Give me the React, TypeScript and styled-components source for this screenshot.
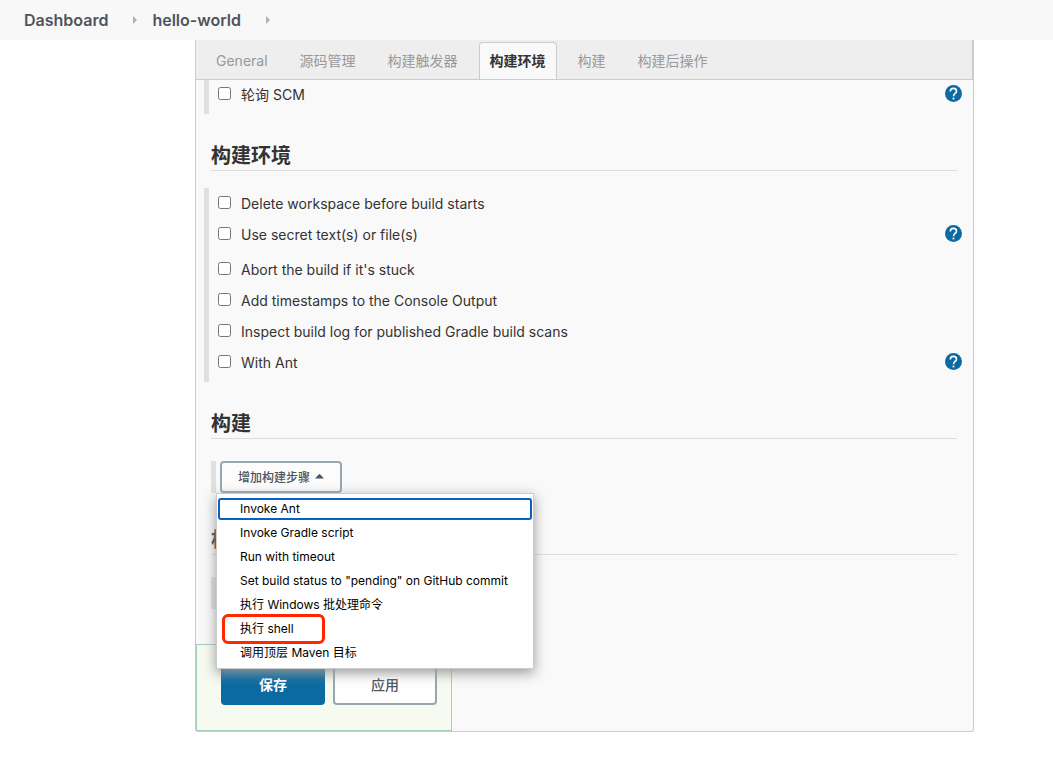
import React from "react";
import styled, { createGlobalStyle } from "styled-components";

const GlobalStyle = createGlobalStyle`
  *, *::before, *::after { box-sizing: border-box; }
  body {
    margin: 0;
    background: #fff;
    color: #333;
    font-family: Inter, "Noto Sans CJK SC", sans-serif;
    font-size: 14px;
    line-height: 20px;
  }
  button { font-family: inherit; cursor: pointer; }
`;

const Breadcrumbs = styled.nav`
  display: flex;
  align-items: center;
  height: 40px;
  padding: 0 24px;
  background: #f8f8f8;
`;

const Crumb = styled.a`
  color: #4d545d;
  font-size: 16px;
  font-weight: 600;
  text-decoration: none;
`;

const CrumbArrow = styled.svg`
  width: 4px;
  height: 8px;
  margin: 0 15px 0 25px;
  fill: #b0b0b0;
`;

const Panel = styled.main`
  margin: 0 79px 24px 195px;
  border: 1px solid #ccc;
  border-top: 0;
  border-radius: 0 0 3px 3px;
  background: #f9f9f9;
`;

const TabBar = styled.div`
  position: relative;
  z-index: 1;
  display: flex;
  align-items: flex-end;
  gap: 10px;
  height: 40px;
  padding: 0 9px;
  border-right: 1px solid #ccc;
  border-bottom: 1px solid #ccc;
  background: #eee;
`;

const Tab = styled.button<{ $active?: boolean }>`
  height: 37px;
  padding: 0 10px;
  border: 1px solid ${(p) => (p.$active ? "#ccc" : "transparent")};
  border-bottom: 0;
  border-radius: 4px 4px 0 0;
  background: ${(p) => (p.$active ? "#f9f9f9" : "transparent")};
  color: ${(p) => (p.$active ? "#333" : "#999")};
  font-size: 14px;
  font-weight: ${(p) => (p.$active ? 700 : 400)};
  line-height: 20px;
`;

const Form = styled.form`
  margin-top: -1px;
`;

const OptionGroup = styled.div`
  margin-left: 8px;
  border-left: 5px solid #e0e0e0;
`;

const OptionRow = styled.div<{ $tall?: boolean }>`
  display: flex;
  align-items: flex-start;
  justify-content: space-between;
  height: ${(p) => (p.$tall ? 35 : 31)}px;
  padding: 6px 11px 0 9px;
`;

const OptionLabel = styled.label`
  display: flex;
  align-items: flex-start;
  gap: 10px;
`;

const Checkbox = styled.input`
  width: 13px;
  height: 13px;
  margin: 2px 0 0;
`;

const HelpButton = styled.button`
  display: flex;
  width: 17px;
  height: 17px;
  padding: 0;
  border: 0;
  border-radius: 50%;
  background: #0b6aa2;
`;

const SectionTitle = styled.h2`
  margin: 29px 16px 0 15px;
  padding-bottom: 1px;
  border-bottom: 1px solid #ddd;
  font-size: 20px;
  font-weight: 600;
  line-height: 26px;

  & + ${OptionGroup} { margin-top: 17px; }
`;

const StepArea = styled.div`
  position: relative;
  display: flex;
  min-height: 32px;
  margin: 22px 16px 34px 15px;
  padding-left: 4px;
  border-left: 5px solid #e0e0e0;
`;

const StepButton = styled.button`
  display: flex;
  align-items: center;
  gap: 5px;
  height: 32px;
  padding: 0 16px 2px;
  border: 2px solid #98a6b0;
  border-radius: 4px;
  background: #fcfcfc;
  color: #4d545d;
  font-size: 12px;
  font-weight: 500;
`;

const Menu = styled.div`
  position: absolute;
  z-index: 2;
  top: 100%;
  left: 0;
  display: flex;
  flex-direction: column;
  gap: 2px;
  width: 318px;
  padding: 4px 1px;
  border: 1px solid #ccc;
  background: #fff;
  box-shadow: 0 4px 12px #999;
`;

const MenuItem = styled.button<{ $focused?: boolean; $marked?: boolean }>`
  position: relative;
  z-index: ${(p) => (p.$marked ? 1 : 0)};
  height: 22px;
  padding: 0 20px;
  border: 2px solid ${(p) => (p.$focused ? "#0a5fc4" : "transparent")};
  border-radius: 3px;
  background: #fff;
  color: #000;
  font-size: 12px;
  line-height: 18px;
  text-align: left;

  &::after {
    content: "";
    display: ${(p) => (p.$marked ? "block" : "none")};
    position: absolute;
    top: -6px;
    left: 2px;
    width: 103px;
    height: 30px;
    border: 3px solid #ff2600;
    border-radius: 6px;
  }
`;

const Footer = styled.div`
  display: flex;
  gap: 8px;
  width: fit-content;
  margin-top: 35px;
  padding: 20px 14px 25px 24px;
  border: 1px solid #a5cdb9;
  background: #f6faf0;
`;

const ActionButton = styled.button<{ $primary?: boolean }>`
  width: 104px;
  height: 40px;
  border: 2px solid ${(p) => (p.$primary ? "#0b6aa2" : "#98a6b0")};
  border-radius: 4px;
  background: ${(p) => (p.$primary ? "#0b6aa2" : "#fff")};
  color: ${(p) => (p.$primary ? "#fff" : "#4d545d")};
  font-size: 14px;
  font-weight: ${(p) => (p.$primary ? 700 : 500)};
  line-height: 20px;
`;

const tabs = ["General", "源码管理", "构建触发器", "构建环境", "构建", "构建后操作"];

const environmentOptions = [
  { label: "Delete workspace before build starts" },
  { label: "Use secret text(s) or file(s)", help: true },
  { label: "Abort the build if it's stuck" },
  { label: "Add timestamps to the Console Output" },
  { label: "Inspect build log for published Gradle build scans" },
  { label: "With Ant", help: true },
];

const steps = [
  "Invoke Ant",
  "Invoke Gradle script",
  "Run with timeout",
  'Set build status to "pending" on GitHub commit',
  "执行 Windows 批处理命令",
  "执行 shell",
  "调用顶层 Maven 目标",
];

function Separator() {
  return (
    <CrumbArrow viewBox="0 0 4 8" aria-hidden="true">
      <path d="M0 0 4 4 0 8Z" />
    </CrumbArrow>
  );
}

function Option({ label, help }: { label: string; help?: boolean }) {
  return (
    <OptionRow $tall={help}>
      <OptionLabel>
        <Checkbox type="checkbox" />
        {label}
      </OptionLabel>
      {help && (
        <HelpButton type="button" aria-label={label}>
          <svg width="17" height="17" viewBox="0 0 17 17" fill="none" aria-hidden="true">
            <path
              d="M5.3 6.4C5.3 4.500 6.700 3.400 8.400 3.400s3.100 1.100 3.100 2.800c0 2.200-3 2.400-3 5"
              stroke="#fff"
              strokeWidth="1.6"
            />
            <path d="M7.600 12.600h1.800v1.800H7.600z" fill="#fff" />
          </svg>
        </HelpButton>
      )}
    </OptionRow>
  );
}

export default function App() {
  return (
    <>
      <GlobalStyle />
      <Breadcrumbs>
        <Crumb href="#">Dashboard</Crumb>
        <Separator />
        <Crumb href="#">hello-world</Crumb>
        <Separator />
      </Breadcrumbs>
      <Panel>
        <TabBar role="tablist">
          {tabs.map((tab) => (
            <Tab key={tab} type="button" role="tab" $active={tab === "构建环境"} aria-selected={tab === "构建环境"}>
              {tab}
            </Tab>
          ))}
        </TabBar>
        <Form>
          <OptionGroup>
            <Option label="轮询 SCM" help />
          </OptionGroup>
          <SectionTitle>构建环境</SectionTitle>
          <OptionGroup>
            {environmentOptions.map((option) => (
              <Option key={option.label} {...option} />
            ))}
          </OptionGroup>
          <SectionTitle>构建</SectionTitle>
          <StepArea>
            <StepButton type="button" aria-haspopup="menu" aria-expanded="true">
              增加构建步骤
              <svg width="9" height="5" viewBox="0 0 9 5" aria-hidden="true">
                <path d="M0 4.500 4 .3q.5-.5 1 0L9 4.500Z" fill="#4d545d" />
              </svg>
            </StepButton>
            <Menu role="menu">
              {steps.map((step, index) => (
                <MenuItem key={step} type="button" role="menuitem" $focused={index === 0} $marked={step === "执行 shell"}>
                  {step}
                </MenuItem>
              ))}
            </Menu>
          </StepArea>
          <SectionTitle>构建后操作</SectionTitle>
          <StepArea />
          <Footer>
            <ActionButton type="submit" $primary>
              保存
            </ActionButton>
            <ActionButton type="button">应用</ActionButton>
          </Footer>
        </Form>
      </Panel>
    </>
  );
}
